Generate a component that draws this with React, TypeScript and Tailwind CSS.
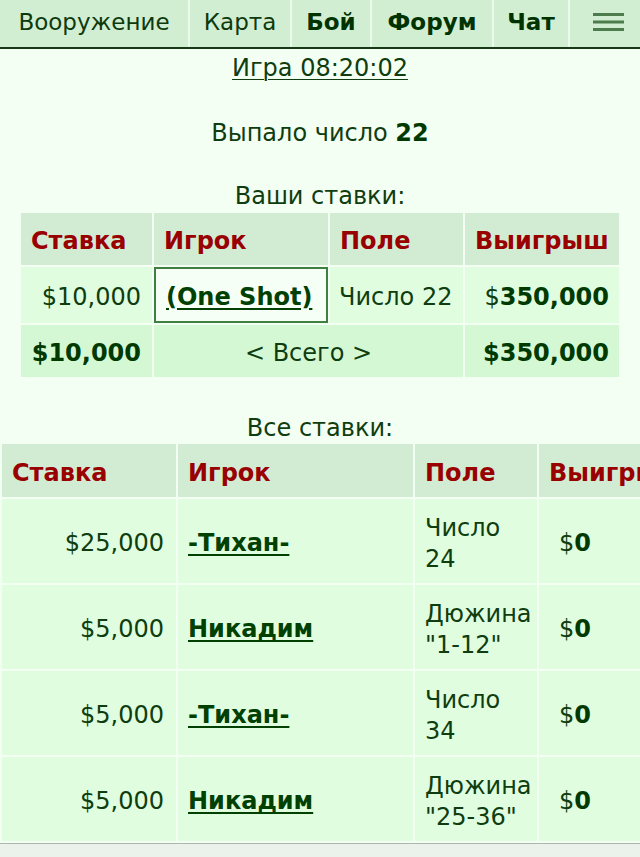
import React from 'react';

type Bet = {
  amount: string;
  player: string;
  field: [string, string];
};

const allBets: Bet[] = [
  { amount: '$25,000', player: '-Тихан-', field: ['Число', '24'] },
  { amount: '$5,000', player: 'Никадим', field: ['Дюжина', '"1-12"'] },
  { amount: '$5,000', player: '-Тихан-', field: ['Число', '34'] },
  { amount: '$5,000', player: 'Никадим', field: ['Дюжина', '"25-36"'] },
];

export default function App() {
  return (
    <div className="min-h-[857px] w-[640px] overflow-hidden bg-[#f4fff4] font-['DejaVu_Sans',Verdana,sans-serif] text-[24px] leading-[31px] text-[#0f3d0f]">
      <NavBar />

      <main>
        {/* Game header */}
        <p className="mt-[4px] text-center">
          <a href="#" className="underline decoration-1 underline-offset-[3px]">
            Игра 08:20:02
          </a>
        </p>
        <p className="mt-[34px] text-center">
          Выпало число <b className="text-[#003a00]">22</b>
        </p>

        {/* Own bets */}
        <p className="mt-[32px] text-center">Ваши ставки:</p>
        <table className="mx-auto -mt-[1px] border-separate border-spacing-[2px]">
          <thead>
            <tr className="h-[52px] bg-[#d2ecd4] [&>th]:pt-[4px]">
              <Th className="w-[131px]">Ставка</Th>
              <Th className="w-[174px]">Игрок</Th>
              <Th className="w-[133px]">Поле</Th>
              <Th className="w-[154px]">Выигрыш</Th>
            </tr>
          </thead>
          <tbody>
            <tr className="h-[56px] bg-[#e0fde0] [&>td]:pt-[4px]">
              <td className="pr-[11px] text-right">$10,000</td>
              <td className="border-2 border-[#3f7f3f] bg-[#f6fff6] pl-[10px]">
                <a href="#" className="font-bold text-[#004000] underline underline-offset-[3px]">
                  (One Shot)
                </a>
              </td>
              <td className="pl-[9px]">Число 22</td>
              <td className="pr-[10px] text-right">
                $<b className="text-[#003a00]">350,000</b>
              </td>
            </tr>
            <tr className="h-[52px] bg-[#d4f8d4] [&>td]:pt-[4px]">
              <td className="pr-[11px] text-right font-bold text-[#003a00]">$10,000</td>
              <td colSpan={2} className="text-center">
                &lt; Всего &gt;
              </td>
              <td className="pr-[10px] text-right font-bold text-[#003a00]">$350,000</td>
            </tr>
          </tbody>
        </table>

        {/* All bets */}
        <p className="mt-[34px] text-center">Все ставки:</p>
        <div className="-mt-[2px] w-[640px] overflow-hidden">
          <table className="w-[760px] table-fixed border-separate border-spacing-[2px]">
            <colgroup>
              <col className="w-[174px]" />
              <col className="w-[235px]" />
              <col className="w-[122px]" />
              <col />
            </colgroup>
            <thead>
              <tr className="h-[53px] bg-[#d2ecd4] [&>th]:pt-[5px]">
                <Th>Ставка</Th>
                <Th>Игрок</Th>
                <Th>Поле</Th>
                <Th>Выигрыш</Th>
              </tr>
            </thead>
            <tbody>
              {allBets.map((bet, i) => (
                <tr key={i} className="h-[84px] bg-[#e0fde0] [&>td]:pt-[5px]">
                  <td className="pr-[12px] text-right">{bet.amount}</td>
                  <td className="pl-[10px]">
                    <a href="#" className="font-bold text-[#004000] underline underline-offset-[3px]">
                      {bet.player}
                    </a>
                  </td>
                  <td className="pl-[10px]">
                    {bet.field[0]}
                    <br />
                    {bet.field[1]}
                  </td>
                  <td className="pl-[20px]">
                    $<b className="text-[#003a00]">0</b>
                  </td>
                </tr>
              ))}
            </tbody>
          </table>
        </div>
        <div className="h-[14px] border-t border-[#a9b9a9] bg-[#ebf2eb]" />
      </main>
    </div>
  );
}

function NavBar() {
  return (
    <nav className="flex h-[49px] border-b-2 border-[#163816] bg-[#d2eed2] text-[23px] text-[#0d3a0d]">
      <NavItem className="w-[190px]">Вооружение</NavItem>
      <NavItem className="w-[102px]">Карта</NavItem>
      <NavItem className="w-[80px]" bold>
        Бой
      </NavItem>
      <NavItem className="w-[122px]" bold>
        Форум
      </NavItem>
      <NavItem className="w-[76px]" bold>
        Чат
      </NavItem>
      <div className="flex flex-1 items-center justify-center">
        <svg width="31" height="20" viewBox="0 0 31 20" className="-mt-[3px] ml-[6px]">
          <rect x="0" y="1" width="31" height="3" fill="#4d7d4d" />
          <rect x="0" y="8.5" width="31" height="3" fill="#4d7d4d" />
          <rect x="0" y="16" width="31" height="3" fill="#4d7d4d" />
        </svg>
      </div>
    </nav>
  );
}

function NavItem({
  children,
  className = '',
  bold = false,
}: {
  children: React.ReactNode;
  className?: string;
  bold?: boolean;
}) {
  return (
    <a
      href="#"
      className={`flex shrink-0 items-center justify-center border-r-2 border-[#eaf9ea] pb-[2px] ${
        bold ? 'font-bold text-[#003300]' : ''
      } ${className}`}
    >
      {children}
    </a>
  );
}

function Th({ children, className = '' }: { children: React.ReactNode; className?: string }) {
  return <th className={`pl-[10px] text-left font-bold text-[#990000] ${className}`}>{children}</th>;
}
